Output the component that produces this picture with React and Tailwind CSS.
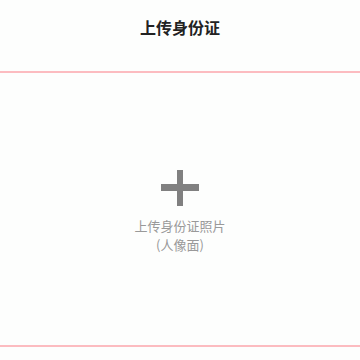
export default function App() {
  return (
    <div className="w-[360px] h-[360px] bg-[#fdfefd] flex flex-col" style={{ fontFamily: '"Noto Sans CJK SC", "Noto Sans", sans-serif' }}>
      <div className="h-[73px] flex items-center justify-center border-b-2 border-[#fcbcc0] shrink-0">
        <span className="text-[16px] font-bold text-[#222] leading-none -mt-[17px]">上传身份证</span>
      </div>
      <div className="h-[274px] pt-[6px] flex flex-col items-center justify-center border-b-2 border-[#fcbcc0] shrink-0">
        <div className="relative w-[38px] h-[36px]">
          <div className="absolute left-[16px] top-0 w-[6px] h-[36px] bg-[#808080]"></div>
          <div className="absolute left-0 top-[14px] w-[38px] h-[7px] bg-[#808080]"></div>
        </div>
        <div className="mt-[10px] text-[13px] leading-[19px] text-[#999] text-center">
          <div>上传身份证照片</div>
          <div>(人像面)</div>
        </div>
      </div>
    </div>
  );
}
